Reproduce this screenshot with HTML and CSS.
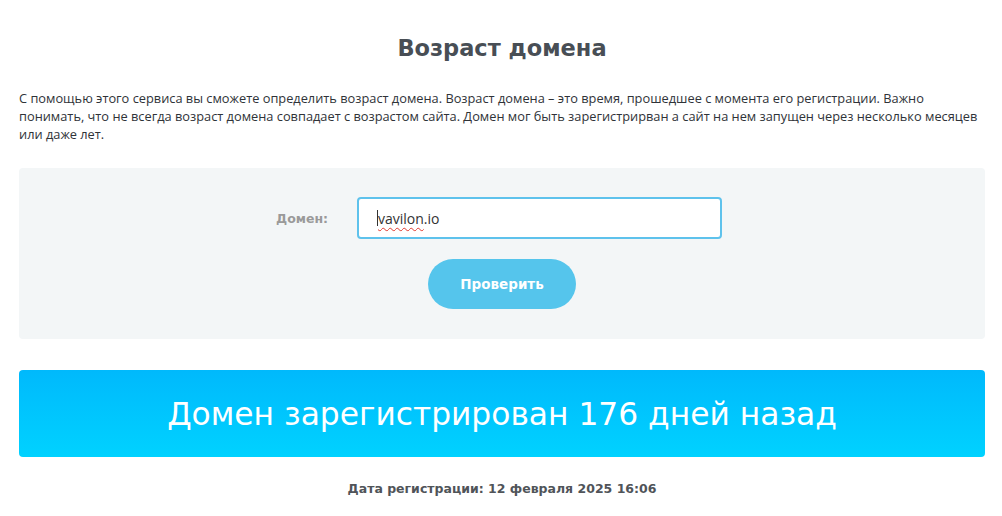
FILE: index.html
```html
<!DOCTYPE html>
<html lang="ru">
<head>
<meta charset="utf-8">
<title>Возраст домена</title>
<link rel="stylesheet" href="styles.css">
</head>
<body>
<div class="page">
  <h1 class="title">Возраст домена</h1>
  <p class="intro">С помощью этого сервиса вы сможете определить возраст домена. Возраст домена – это время, прошедшее с момента его регистрации. Важно понимать, что не всегда возраст домена совпадает с возрастом сайта. Домен мог быть зарегистрирван а сайт на нем запущен через несколько месяцев или даже лет.</p>
  <div class="form-box">
    <div class="row">
      <label class="label">Домен:</label>
      <div class="input"><span class="caret"></span><span class="typo">vavilon</span>.io</div>
    </div>
    <button class="btn">Проверить</button>
  </div>
  <div class="banner">Домен зарегистрирован 176 дней назад</div>
  <div class="date">Дата регистрации: 12 февраля 2025 16:06</div>
</div>
</body>
</html>
```

FILE: styles.css
```css
html, body {
  margin: 0;
  padding: 0;
  background: #fff;
}
.page {
  padding: 0 17px 0 19px;
  font-family: "DejaVu Sans", "Open Sans", sans-serif;
}
.title {
  margin: 33px 0 0;
  text-align: center;
  font-size: 22.5px;
  font-weight: 700;
  color: #484e55;
  line-height: 30px;
}
.intro {
  margin: 26px 0 0;
  font-family: "Open Sans", "Lato", sans-serif;
  font-size: 12.8px;
  line-height: 18px;
  color: #2f3338;
}
.form-box {
  margin-top: 25px;
  background: #f3f6f7;
  border-radius: 4px;
  padding: 29px 0 30px;
  display: flex;
  flex-direction: column;
  align-items: center;
  gap: 20px;
}
.row {
  display: flex;
  align-items: center;
  gap: 31px;
  margin-left: -6px;
}
.label {
  font-size: 12.5px;
  font-weight: 700;
  color: #9a9a9a;
  width: 50px;
}
.input {
  box-sizing: border-box;
  width: 365px;
  height: 42px;
  background: #fff;
  border: 2px solid #5ec2ec;
  border-radius: 4px;
  padding: 0 18px;
  display: flex;
  align-items: center;
  font-family: "Open Sans", sans-serif;
  font-size: 14px;
  color: #333;
}
.caret {
  display: inline-block;
  width: 1px;
  height: 16px;
  background: #333;
}
.typo {
  text-decoration: underline wavy #e0392f;
  text-decoration-thickness: 1px;
  text-underline-offset: 3px;
}
.btn {
  width: 148px;
  height: 50px;
  border: none;
  border-radius: 25px;
  background: #55c5ec;
  color: #fff;
  font-family: "DejaVu Sans", sans-serif;
  font-size: 13.5px;
  font-weight: 700;
  cursor: pointer;
}
.banner {
  margin-top: 31px;
  height: 87px;
  border-radius: 4px;
  background: linear-gradient(180deg, #00b9fc 0%, #00d2ff 100%);
  color: #fff;
  display: flex;
  align-items: center;
  justify-content: center;
  font-size: 31.3px;
  font-weight: 400;
}
.date {
  margin-top: 24px;
  text-align: center;
  font-size: 12.5px;
  font-weight: 700;
  color: #505459;
}
```
